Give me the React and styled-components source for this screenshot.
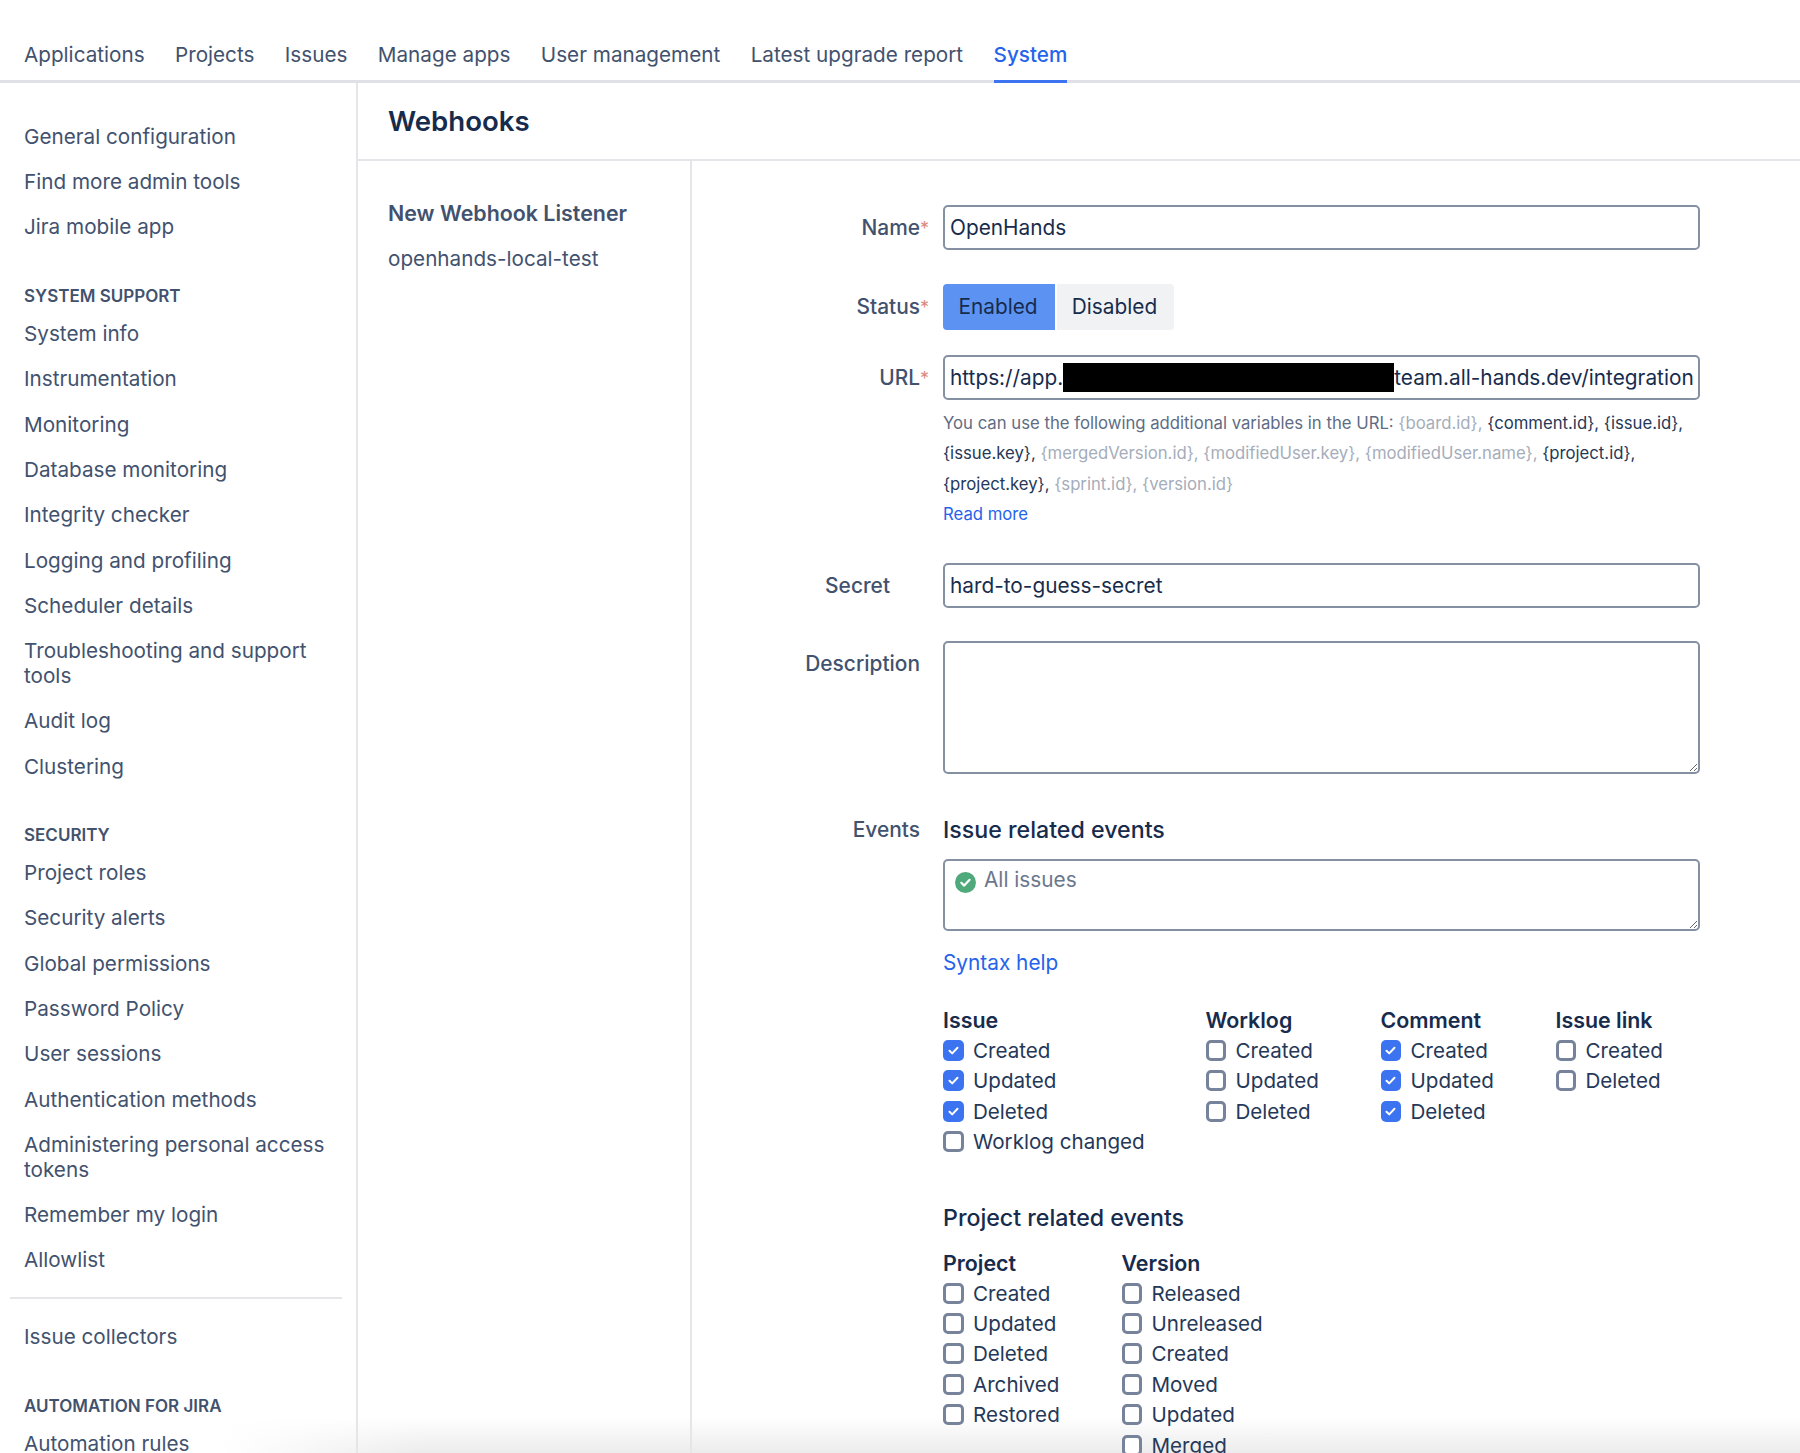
import React from "react";
import styled, { createGlobalStyle } from "styled-components";

const Global = createGlobalStyle`
  html, body { margin: 0; padding: 0; background: #fff; }
  body { font-family: Inter, "Liberation Sans", sans-serif; color: #172b4d; }
  * { box-sizing: border-box; }
`;

const Page = styled.div`
  position: relative;
  width: 1800px;
  height: 1453px;
  overflow: hidden;
  background: #fff;
`;

const Layer = styled.div`
  position: relative;
  z-index: 1;
`;

const TopNav = styled.nav`
  display: flex;
  gap: 30.4px;
  height: 83px;
  padding: 0 0 0 24px;
  border-bottom: 3px solid #e0e1e6;
`;

const Tab = styled.a`
  display: flex;
  align-items: center;
  height: 83px;
  flex: none;
  padding-top: 28px;
  font-size: 20.7px;
  color: ${p => (p.$active ? "#2563eb" : "#42526e")};
  font-weight: ${p => (p.$active ? 500 : 400)};
  border-bottom: 3px solid ${p => (p.$active ? "#3b73f0" : "transparent")};
`;

const Body = styled.div`
  display: flex;
  height: 1370px;
`;

const Sidebar = styled.aside`
  width: 358px;
  flex: none;
  padding: 31px 10px 0;
  border-right: 2px solid #e4e6ea;
`;

const SideLink = styled.a`
  display: block;
  padding: 10.55px 14px;
  font-size: 20.7px;
  line-height: 24.3px;
  color: #42526e;
`;

const SideTitle = styled.h3`
  margin: 34.5px 0 3.5px;
  padding: 0 14px;
  height: 23px;
  line-height: 23px;
  font-size: 17px;
  font-weight: 600;
  color: #42526e;
  text-transform: uppercase;
`;

const SideRule = styled.hr`
  margin: 14px 4px 15.5px 0;
  border: 0;
  height: 2px;
  background: #e4e6ea;
`;

const Main = styled.main`
  flex: 1;
  min-width: 0;
  display: flex;
  flex-direction: column;
`;

const Header = styled.header`
  height: 78px;
  flex: none;
  display: flex;
  align-items: center;
  padding: 0 0 0 30px;
  border-bottom: 2px solid #e4e6ea;
`;

const Title = styled.h1`
  margin: 0;
  font-size: 27.6px;
  font-weight: 600;
  color: #172b4d;
`;

const Columns = styled.div`
  display: flex;
  flex: 1;
  min-height: 0;
`;

const ListPanel = styled.div`
  width: 334px;
  flex: none;
  padding: 29.5px 0 0 30px;
  border-right: 2px solid #e4e6ea;
`;

const ListItem = styled.div`
  height: 45.5px;
  display: flex;
  align-items: center;
  font-size: ${p => (p.$strong ? 21.4 : 20.7)}px;
  color: #42526e;
  font-weight: ${p => (p.$strong ? 600 : 400)};
`;

const Form = styled.form`
  flex: 1;
  padding-top: 44px;
`;

const Row = styled.div`
  display: grid;
  grid-template-columns: 236px 757px;
  column-gap: 15px;
  margin-bottom: ${p => p.$gap || 33}px;
`;

const Label = styled.label`
  text-align: right;
  font-size: 20.9px;
  font-weight: 500;
  line-height: ${p => p.$line || 45}px;
  color: #42526e;
  padding-right: ${p => p.$pad || 0}px;
`;

const Req = styled.span`
  display: inline-block;
  width: 8px;
  color: #d98a80;
  font-weight: 400;
  font-size: 18px;
  text-align: right;
`;

const Input = styled.div`
  height: 45px;
  padding: 0 5px;
  display: flex;
  align-items: center;
  border: 2px solid #8590a2;
  border-radius: 5px;
  font-size: 20.8px;
  color: #172b4d;
  white-space: nowrap;
  overflow: hidden;
`;

const Redaction = styled.span`
  flex: none;
  width: 331px;
  height: 29px;
  background: #000;
`;

const Toggle = styled.div`
  display: flex;
  height: 46px;
`;

const ToggleBtn = styled.button`
  border: 0;
  margin: 0 0 0 ${p => (p.$on ? 0 : 2)}px;
  padding: 0 2px 2px 0;
  width: ${p => (p.$on ? 112 : 117)}px;
  font: inherit;
  font-size: 20.8px;
  color: #172b4d;
  background: ${p => (p.$on ? "#5c93f2" : "#f1f2f4")};
  border-radius: ${p => (p.$on ? "4px 0 0 4px" : "0 4px 4px 0")};
`;

const Help = styled.div`
  margin-top: 8px;
  font-size: 16.72px;
  line-height: 30.4px;
  color: #5e6c84;
`;

const Var = styled.span`
  color: ${p => (p.$off ? "#a5adba" : "#253858")};
`;

const A = styled.a`
  color: #2563eb;
`;

const Area = styled.textarea`
  display: block;
  width: 757px;
  margin: 0;
  padding: 8px 5px;
  height: ${p => p.$h}px;
  border: 2px solid #8590a2;
  border-radius: 5px;
  font: inherit;
  font-size: 20.8px;
  outline: 0;
  resize: vertical;
`;

const FilterWrap = styled.div`
  position: relative;
  margin-top: 14px;
`;

const FilterArea = styled(Area)`
  padding: 7px 5px 8px 39px;
  line-height: 24px;
  color: #6b778c;
`;

const OkIcon = styled.svg`
  position: absolute;
  left: 12px;
  top: 13px;
  width: 21px;
  height: 21px;
`;

const Heading = styled.h2`
  margin: ${p => p.$top || 0}px 0 0;
  font-size: 23.2px;
  line-height: 30px;
  font-weight: 500;
  color: #172b4d;
`;

const Syntax = styled.div`
  margin-top: 17px;
  font-size: 20.8px;
  line-height: 30px;
`;

const Groups = styled.div`
  display: grid;
  grid-template-columns: ${p => p.$cols};
  margin-top: ${p => p.$top}px;
`;

const GroupTitle = styled.div`
  font-size: 21.4px;
  font-weight: 600;
  line-height: 30.4px;
  color: #172b4d;
`;

const Check = styled.label`
  display: flex;
  align-items: center;
  gap: 9.5px;
  height: 30.4px;
  font-size: 20.6px;
  color: #253858;
`;

const Box = styled.span`
  flex: none;
  width: 20.5px;
  height: 21px;
  display: flex;
  align-items: center;
  justify-content: center;
  border-radius: 5px;
  border: ${p => (p.$on ? "0" : "3px solid #77839a")};
  background: ${p => (p.$on ? "#3b73f0" : "#fff")};
`;

const Fade = styled.div`
  position: absolute;
  left: 0;
  right: 0;
  bottom: 0;
  height: 36px;
  background: linear-gradient(rgba(235, 235, 235, 0), rgba(235, 235, 235, 0.95));
  mask-image: linear-gradient(90deg, transparent 220px, #000 420px);
  pointer-events: none;
`;

const TABS = ["Applications", "Projects", "Issues", "Manage apps", "User management", "Latest upgrade report", "System"];

const SIDE = [
  { items: ["General configuration", "Find more admin tools", "Jira mobile app"] },
  { title: "System support", items: ["System info", "Instrumentation", "Monitoring", "Database monitoring", "Integrity checker", "Logging and profiling", "Scheduler details", "Troubleshooting and support tools", "Audit log", "Clustering"] },
  { title: "Security", items: ["Project roles", "Security alerts", "Global permissions", "Password Policy", "User sessions", "Authentication methods", "Administering personal access tokens", "Remember my login", "Allowlist"] },
];

const ISSUE_GROUPS = [
  { title: "Issue", items: [["Created", 1], ["Updated", 1], ["Deleted", 1], ["Worklog changed", 0]] },
  { title: "Worklog", items: [["Created", 0], ["Updated", 0], ["Deleted", 0]] },
  { title: "Comment", items: [["Created", 1], ["Updated", 1], ["Deleted", 1]] },
  { title: "Issue link", items: [["Created", 0], ["Deleted", 0]] },
];

const PROJECT_GROUPS = [
  { title: "Project", items: ["Created", "Updated", "Deleted", "Archived", "Restored"].map(t => [t, 0]) },
  { title: "Version", items: ["Released", "Unreleased", "Created", "Moved", "Updated", "Merged"].map(t => [t, 0]) },
];

const CheckGroup = ({ group }) => (
  <div>
    <GroupTitle>{group.title}</GroupTitle>
    {group.items.map(([text, on]) => (
      <Check key={text}>
        <Box $on={!!on}>
          {on ? (
            <svg width="13" height="13" viewBox="0 0 13 13" fill="none">
              <path d="M2.5 6.8 5.2 9.4 10.5 3.8" stroke="#fff" strokeWidth="2" strokeLinecap="round" strokeLinejoin="round" />
            </svg>
          ) : null}
        </Box>
        {text}
      </Check>
    ))}
  </div>
);

export default function App() {
  return (
    <Page>
      <Global />
      <Fade />
      <Layer>
        <TopNav>
          {TABS.map(t => (
            <Tab key={t} $active={t === "System"}>{t}</Tab>
          ))}
        </TopNav>
        <Body>
          <Sidebar>
            {SIDE.map((s, i) => (
              <div key={i}>
                {s.title && <SideTitle>{s.title}</SideTitle>}
                {s.items.map(t => <SideLink key={t}>{t}</SideLink>)}
              </div>
            ))}
            <SideRule />
            <SideLink>Issue collectors</SideLink>
            <SideTitle>Automation for Jira</SideTitle>
            <SideLink>Automation rules</SideLink>
          </Sidebar>
          <Main>
            <Header><Title>Webhooks</Title></Header>
            <Columns>
              <ListPanel>
                <ListItem $strong>New Webhook Listener</ListItem>
                <ListItem>openhands-local-test</ListItem>
              </ListPanel>
              <Form>
                <Row>
                  <Label>Name<Req>*</Req></Label>
                  <Input>OpenHands</Input>
                </Row>
                <Row $gap={25}>
                  <Label>Status<Req>*</Req></Label>
                  <Toggle>
                    <ToggleBtn type="button" $on>Enabled</ToggleBtn>
                    <ToggleBtn type="button">Disabled</ToggleBtn>
                  </Toggle>
                </Row>
                <Row>
                  <Label>URL<Req>*</Req></Label>
                  <div>
                    <Input>https://app.<Redaction />team.all-hands.dev/integration</Input>
                    <Help>
                      You can use the following additional variables in the URL: <Var $off>{"{board.id},"}</Var> <Var>{"{comment.id}, {issue.id},"}</Var><br />
                      <Var>{"{issue.key},"}</Var> <Var $off>{"{mergedVersion.id}, {modifiedUser.key}, {modifiedUser.name},"}</Var> <Var>{"{project.id},"}</Var><br />
                      <Var>{"{project.key},"}</Var> <Var $off>{"{sprint.id}, {version.id}"}</Var><br />
                      <A>Read more</A>
                    </Help>
                  </div>
                </Row>
                <Row>
                  <Label $pad={38}>Secret</Label>
                  <Input>hard-to-guess-secret</Input>
                </Row>
                <Row $gap={41}>
                  <Label $pad={8}>Description</Label>
                  <Area $h={133} />
                </Row>
                <Row>
                  <Label $pad={8} $line={30}>Events</Label>
                  <div>
                    <Heading>Issue related events</Heading>
                    <FilterWrap>
                      <FilterArea $h={72} defaultValue="All issues" />
                      <OkIcon viewBox="0 0 21 21">
                        <circle cx="10.5" cy="10.5" r="10.5" fill="#4fa97a" />
                        <path d="M6.3 10.8 9.2 13.6 14.6 7.8" fill="none" stroke="#fff" strokeWidth="2.2" strokeLinecap="round" strokeLinejoin="round" />
                      </OkIcon>
                    </FilterWrap>
                    <Syntax><A>Syntax help</A></Syntax>
                    <Groups $cols="262.5px 175px 175px 143.5px" $top={27}>
                      {ISSUE_GROUPS.map(g => <CheckGroup key={g.title} group={g} />)}
                    </Groups>
                    <Heading $top={46}>Project related events</Heading>
                    <Groups $cols="178.5px 300px" $top={15}>
                      {PROJECT_GROUPS.map(g => <CheckGroup key={g.title} group={g} />)}
                    </Groups>
                  </div>
                </Row>
              </Form>
            </Columns>
          </Main>
        </Body>
      </Layer>
    </Page>
  );
}
